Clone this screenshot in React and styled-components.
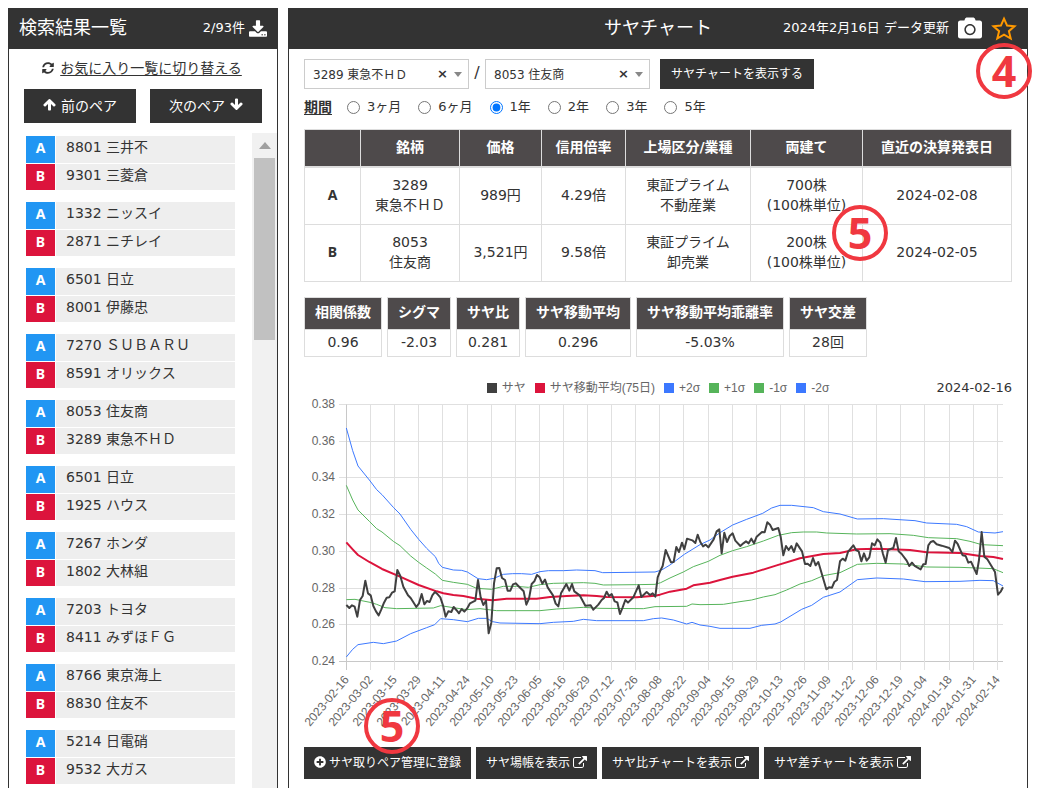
import React, { useState } from 'react';
import styled, { createGlobalStyle } from 'styled-components';
import { FaCamera, FaPlusCircle, FaSyncAlt } from 'react-icons/fa';

const colors = {
  dark: '#333333',
  tableHead: '#4e4a4b',
  line: '#dddddd',
  text: '#333333',
  sideA: '#2196f3',
  sideB: '#dc143c',
  rowBg: '#eeeeee',
  mark: '#f03840',
  orange: '#ff9900',
  chartText: '#666666',
  saya: '#404040',
  average: '#dc143c',
  sigma1: '#56b45a',
  sigma2: '#3c78ff',
};

const GlobalStyle = createGlobalStyle`
  * {
    box-sizing: border-box;
  }

  body {
    margin: 0;
    background: #ffffff;
    color: ${colors.text};
    font-family: 'DejaVu Sans', 'Noto Sans CJK JP', sans-serif;
    font-size: 14px;
    line-height: 20px;
  }

  button, select, input {
    font-family: inherit;
    color: inherit;
  }
`;

const Page = styled.div`
  display: grid;
  grid-template-columns: 270px minmax(0, 1fr);
  gap: 10px;
  min-height: 100vh;
  padding: 8px 13px 0 8px;
`;

const Panel = styled.section`
  display: flex;
  flex-direction: column;
  border: 1px solid ${colors.dark};
  border-bottom: 0;
`;

const PanelHeader = styled.header`
  display: grid;
  grid-template-columns: ${({ $columns }) => $columns};
  align-items: center;
  height: 40px;
  padding: 0 10px 2px;
  background: ${colors.dark};
  color: #ffffff;
  font-size: 13px;
`;

const Title = styled.h1`
  margin: 0;
  font-size: 18px;
  font-weight: 400;
  line-height: 36px;
`;

const HeaderTools = styled.div`
  position: relative;
  display: flex;
  justify-content: flex-end;
  align-items: center;
  gap: ${({ $gap }) => $gap};
`;

const IconButton = styled.button`
  display: flex;
  padding: 0;
  border: 0;
  background: none;
  color: ${({ $color }) => $color || '#ffffff'};
  font-size: ${({ $size }) => $size};
  cursor: pointer;
`;

const SwitchRow = styled.div`
  display: flex;
  justify-content: center;
  align-items: center;
  gap: 6px;
  height: 40px;
  padding: 0 2px 2px 0;
  font-size: 12px;
`;

const SwitchLink = styled.a`
  color: ${colors.text};
  font-size: 14px;
  text-underline-offset: 2px;
`;

const PairNav = styled.div`
  display: grid;
  grid-template-columns: 1fr 1fr;
  gap: 14px;
  padding: 0 15px;
`;

const DarkButton = styled.button`
  display: flex;
  justify-content: center;
  align-items: center;
  gap: ${({ $gap }) => $gap || '3px'};
  height: ${({ $height }) => $height};
  padding: 0 ${({ $padding }) => $padding || '10px'} 3px;
  border: 0;
  background: ${colors.dark};
  color: #ffffff;
  font-size: ${({ $size }) => $size || '12px'};
  white-space: nowrap;
  cursor: pointer;
`;

const ListArea = styled.div`
  display: flex;
  flex: 1;
  justify-content: space-between;
  margin-top: 10px;
`;

const PairList = styled.ul`
  display: flex;
  flex: 1;
  flex-direction: column;
  gap: 12px;
  margin: 0;
  padding: 3px 17px 0 17px;
  list-style: none;
`;

const PairItem = styled.li`
  display: grid;
  grid-template-columns: 29px 1fr;
  grid-template-rows: 27px 26px;
  gap: 1px;
  cursor: pointer;
`;

const SideBadge = styled.span`
  background: ${({ $side }) => ($side === 'A' ? colors.sideA : colors.sideB)};
  color: #ffffff;
  font-family: 'Noto Sans', sans-serif;
  font-weight: 700;
  line-height: 23px;
  text-align: center;
`;

const StockName = styled.span`
  padding-left: 10px;
  background: ${colors.rowBg};
  line-height: 22px;
`;

const ScrollTrack = styled.div`
  display: flex;
  flex-direction: column;
  align-items: center;
  gap: 9px;
  width: 25px;
  padding-top: 9px;
  background: #f1f1f1;

  &::before {
    content: '';
    border: 6px solid transparent;
    border-top: 0;
    border-bottom: 7px solid #a0a0a0;
  }
`;

const ScrollThumb = styled.div`
  width: 21px;
  height: 182px;
  background: #c1c1c1;
`;

const Content = styled.main`
  padding: 10px 15px 8px;
`;

const PairForm = styled.form`
  display: flex;
  align-items: center;
`;

const SelectBox = styled.div`
  position: relative;
  width: 165px;

  select {
    width: 100%;
    height: 30px;
    padding: 1px 40px 0 8px;
    border: 1px solid #cccccc;
    border-radius: 0;
    background: #ffffff;
    font-size: 12px;
    appearance: none;
  }

  button {
    position: absolute;
    top: 5px;
    right: 21px;
    padding: 0;
    border: 0;
    background: none;
    font-size: 13px;
    font-weight: 700;
    line-height: 20px;
  }

  &::after {
    content: '';
    position: absolute;
    top: 13px;
    right: 7px;
    border: 4px solid transparent;
    border-top: 5px solid #888888;
    border-bottom: 0;
    pointer-events: none;
  }
`;

const Slash = styled.span`
  width: 16px;
  padding-bottom: 3px;
  font-size: 16px;
  text-align: center;
`;

const SubmitWrap = styled.div`
  margin-left: 10px;
`;

const PeriodRow = styled.fieldset`
  display: flex;
  align-items: center;
  gap: 15px;
  height: 20px;
  margin: 8px 0 12px;
  padding: 0;
  border: 0;
  font-size: 13px;
`;

const PeriodTitle = styled.span`
  font-size: 14px;
  font-weight: 700;
  text-decoration: underline;
  text-underline-offset: 2px;
`;

const PeriodChoices = styled.div`
  display: flex;
  gap: 17px;
`;

const PeriodLabel = styled.label`
  display: flex;
  align-items: center;
  gap: 7px;

  input {
    width: 13px;
    height: 13px;
    margin: 0;
  }
`;

const TableArea = styled.div`
  position: relative;
`;

const StockTable = styled.table`
  width: 100%;
  border-collapse: collapse;
  table-layout: fixed;
  text-align: center;

  th, td {
    padding: 7px 0 9px;
    border: 1px solid ${colors.line};
    white-space: pre-line;
  }

  thead th {
    border-bottom-width: 2px;
    background: ${colors.tableHead};
    color: #ffffff;
  }

  tbody th {
    font-family: 'Noto Sans', sans-serif;
  }
`;

const Stats = styled.dl`
  display: flex;
  gap: 5px;
  margin: 15px 0 20px;
`;

const Stat = styled.div`
  border: 1px solid ${colors.line};
  text-align: center;

  dt {
    padding: 4px 10px 7px;
    background: ${colors.tableHead};
    color: #ffffff;
    font-weight: 700;
  }

  dd {
    margin: 0;
    padding: 2px 0 4px;
    border-top: 1px solid ${colors.line};
  }
`;

const ChartHead = styled.div`
  display: grid;
  grid-template-columns: 1fr auto 1fr;
  align-items: center;
  height: 21px;
  font-size: 13px;

  time {
    text-align: right;
  }
`;

const Legend = styled.ul`
  display: flex;
  grid-column: 2;
  gap: 9px;
  margin: 0;
  padding: 0;
  list-style: none;
  color: ${colors.chartText};
  font-family: 'Liberation Sans', 'Noto Sans CJK JP', sans-serif;
  font-size: 12px;
`;

const LegendItem = styled.li`
  display: flex;
  align-items: center;
  gap: 5px;

  &::before {
    content: '';
    width: 10px;
    height: 10px;
    background: ${({ $color }) => $color};
  }
`;

const ChartArea = styled.div`
  position: relative;

  svg {
    display: block;
    width: 100%;
    overflow: visible;
  }

  text {
    fill: ${colors.chartText};
    font-family: 'Liberation Sans', sans-serif;
    font-size: 12px;
    text-anchor: end;
  }
`;

const Actions = styled.div`
  display: flex;
  gap: 5px;
  margin-top: 11px;
`;

// numbered circle that lies over the page and points at a feature
const Mark = styled.span`
  position: absolute;
  z-index: 1;
  top: ${({ $top }) => $top};
  left: ${({ $left }) => $left};
  right: ${({ $right }) => $right};
  width: 56px;
  height: 56px;
  border: 4px solid ${colors.mark};
  border-radius: 50%;
  color: ${colors.mark};
  font-family: 'Open Sans', sans-serif;
  font-size: 43px;
  font-weight: 700;
  line-height: 47px;
  text-align: center;
  pointer-events: none;
`;

const pairs = [
  ['8801 三井不', '9301 三菱倉'],
  ['1332 ニッスイ', '2871 ニチレイ'],
  ['6501 日立', '8001 伊藤忠'],
  ['7270 ＳＵＢＡＲＵ', '8591 オリックス'],
  ['8053 住友商', '3289 東急不ＨＤ'],
  ['6501 日立', '1925 ハウス'],
  ['7267 ホンダ', '1802 大林組'],
  ['7203 トヨタ', '8411 みずほＦＧ'],
  ['8766 東京海上', '8830 住友不'],
  ['5214 日電硝', '9532 大ガス'],
];

const periods = ['3ヶ月', '6ヶ月', '1年', '2年', '3年', '5年'];

const columns = [
  { title: '', width: 56 },
  { title: '銘柄', width: 99 },
  { title: '価格', width: 82 },
  { title: '信用倍率', width: 84 },
  { title: '上場区分/業種', width: 125 },
  { title: '両建て', width: 112 },
  { title: '直近の決算発表日', width: 149 },
];

const stocks = [
  {
    side: 'A',
    cells: ['3289\n東急不ＨＤ', '989円', '4.29倍', '東証プライム\n不動産業', '700株\n(100株単位)', '2024-02-08'],
  },
  {
    side: 'B',
    cells: ['8053\n住友商', '3,521円', '9.58倍', '東証プライム\n卸売業', '200株\n(100株単位)', '2024-02-05'],
  },
];

const stats = [
  ['相関係数', '0.96'],
  ['シグマ', '-2.03'],
  ['サヤ比', '0.281'],
  ['サヤ移動平均', '0.296'],
  ['サヤ移動平均乖離率', '-5.03%'],
  ['サヤ交差', '28回'],
];

const legend = [
  ['サヤ', colors.saya],
  ['サヤ移動平均(75日)', colors.average],
  ['+2σ', colors.sigma2],
  ['+1σ', colors.sigma1],
  ['-1σ', colors.sigma1],
  ['-2σ', colors.sigma2],
];

const yTicks = ['0.38', '0.36', '0.34', '0.32', '0.30', '0.28', '0.26', '0.24'];

const xTicks = [
  '2023-02-16', '2023-03-02', '2023-03-15', '2023-03-29', '2023-04-11', '2023-04-24', '2023-05-10',
  '2023-05-23', '2023-06-05', '2023-06-16', '2023-06-29', '2023-07-12', '2023-07-26', '2023-08-08',
  '2023-08-22', '2023-09-04', '2023-09-15', '2023-09-29', '2023-10-13', '2023-10-26', '2023-11-09',
  '2023-11-22', '2023-12-06', '2023-12-19', '2024-01-04', '2024-01-18', '2024-01-31', '2024-02-14',
];

// series points, three units to one chart unit
const series = [
  {
    color: colors.sigma2,
    width: 1,
    points: `169,174 188,242 204,288 238,330 260,359 276,374 310,412 330,432 362,478 386,508 410,535
      436,560 446,580 457,592 490,600 515,601 532,606 564,626 590,629 612,625 640,613 668,611 695,611
      725,613 750,605 775,602 820,602 860,600 915,602 938,608 1020,607 1095,606 1115,600 1140,585
      1183,553 1230,524 1260,510 1290,488 1328,465 1370,448 1418,430 1445,414 1470,406 1505,406
      1570,413 1600,425 1650,432 1702,447 1780,446 1875,452 1910,459 2000,463 2030,470 2065,486
      2115,489 2139,485`,
  },
  {
    color: colors.sigma2,
    width: 1,
    points: `169,861 188,838 204,824 250,817 280,821 320,813 362,791 410,773 434,764 452,746 490,749
      532,755 565,745 590,745 608,755 630,759 750,761 790,757 850,754 880,748 920,752 1060,752
      1090,746 1115,744 1150,750 1190,762 1206,757 1230,765 1260,769 1290,775 1380,775 1415,766
      1455,762 1472,756 1535,718 1565,706 1600,682 1650,666 1702,629 1760,624 1840,627 1905,635
      2010,634 2070,631 2110,632 2139,648`,
  },
  {
    color: colors.sigma1,
    width: 1,
    points: `169,346 188,390 204,420 238,454 260,476 276,486 310,514 330,527 362,558 386,577 410,594
      436,612 457,631 490,637 532,643 560,655 604,658 640,649 680,649 715,652 750,644 790,640
      880,638 915,640 940,645 1040,644 1095,643 1112,638 1140,624 1180,606 1210,590 1255,574
      1290,556 1328,542 1370,530 1420,513 1465,496 1505,488 1540,486 1580,486 1610,489 1700,492
      1800,491 1870,496 1915,503 2000,506 2040,514 2075,524 2139,527`,
  },
  {
    color: colors.sigma1,
    width: 1,
    points: `169,689 195,688 240,697 260,703 285,713 320,716 430,714 452,707 490,713 530,719 570,716
      620,722 750,722 800,717 880,712 930,715 1060,716 1095,710 1190,709 1206,702 1230,704
      1300,703 1350,695 1385,690 1420,681 1455,674 1490,660 1530,642 1565,632 1600,617 1650,608
      1702,583 1760,580 1840,582 1910,591 2010,592 2110,596 2139,608`,
  },
  {
    color: colors.average,
    width: 2,
    points: `169,517 188,538 204,555 238,576 276,597 330,620 386,645 440,664 460,670 490,675 520,678
      560,686 608,691 650,686 740,686 780,681 830,678 880,676 920,678 950,681 1040,682 1095,677
      1110,674 1140,665 1190,656 1210,646 1260,638 1290,630 1328,620 1390,608 1460,586 1530,565
      1600,552 1650,549 1700,538 1760,536 1860,540 1910,547 2010,549 2070,558 2110,561 2139,567`,
  },
  {
    color: colors.saya,
    width: 2,
    points: `169,705 178,714 186,706 194,710 202,740 210,690 218,678 226,632 234,670 242,676 250,708
      258,724 266,736 274,718 282,698 290,683 298,682 306,668 314,664 322,600 331,618 340,650
      354,676 362,684 372,700 379,711 387,700 395,672 403,703 411,693 419,696 427,676 435,666
      443,673 451,682 459,706 467,740 475,724 484,726 491,711 499,720 507,730 515,717 523,725
      531,716 540,700 556,692 564,630 572,682 580,705 588,692 596,790 604,758 612,640 620,595
      628,594 636,624 645,630 653,662 661,662 669,643 677,640 685,648 701,664 709,704 717,686
      725,642 733,634 741,615 749,622 757,641 765,629 773,652 789,676 797,701 805,709 813,670
      829,642 838,662 846,642 853,664 869,676 886,707 902,706 910,719 925,704 935,690 942,684
      950,665 957,678 965,672 974,694 982,697 990,732 998,712 1006,690 1014,698 1030,682
      1046,646 1054,681 1070,666 1080,675 1088,670 1096,680 1103,622 1111,602 1118,588 1127,540
      1143,577 1151,576 1159,531 1167,546 1176,518 1183,538 1191,506 1207,511 1216,519 1223,494
      1231,516 1239,529 1247,524 1255,532 1263,520 1271,508 1280,484 1288,478 1295,550 1303,488
      1311,516 1319,498 1328,490 1336,512 1351,528 1360,520 1368,514 1376,520 1384,506 1392,520
      1400,500 1416,486 1424,487 1432,457 1440,464 1448,480 1465,474 1472,500 1480,556 1488,528
      1496,540 1504,528 1512,546 1520,520 1536,544 1545,582 1553,581 1561,588 1569,564 1577,586
      1585,576 1609,658 1617,652 1626,653 1633,636 1641,630 1650,574 1658,566 1666,572 1674,546
      1690,526 1698,540 1706,544 1714,574 1722,550 1730,572 1738,562 1746,520 1754,526 1762,508
      1771,518 1779,552 1787,578 1794,540 1810,534 1818,504 1826,544 1835,552 1850,572 1858,588
      1866,578 1874,588 1892,598 1900,583 1907,582 1915,526 1922,516 1930,513 1940,523 1955,527
      1978,534 1987,546 1995,512 2003,522 2018,556 2027,558 2035,578 2043,575 2060,612 2067,570
      2075,486 2083,560 2092,568 2108,594 2115,606 2124,674 2132,665 2139,652`,
  },
];

const PLOT = { left: 42.5, right: 699, top: 6.5, bottom: 263.5 };

const xAt = (i) => Math.round(PLOT.left + i * 24.1 - 0.5) + 0.5;
const yAt = (i) => Math.round(PLOT.top + (i * (PLOT.bottom - PLOT.top)) / 7 - 0.5) + 0.5;

const StarIcon = () => (
  <svg width="26" height="25" viewBox="0 0 26 25" fill="none" stroke="currentColor" strokeWidth="2">
    <path d="M13 2.6 L16.1 9.6 L23.5 10.2 L17.9 15.2 L19.7 22.5 L13 18.6 L6.3 22.5 L8.1 15.2 L2.5 10.2 L9.9 9.6 Z" />
  </svg>
);

const DownloadIcon = () => (
  <svg width="18" height="17" viewBox="0 0 1664 1536" fill="currentColor" aria-hidden="true">
    <path d="M1280 1344q0-26-19-45t-45-19-45 19-19 45 19 45 45 19 45-19 19-45zM1536 1344q0-26-19-45t-45-19-45 19-19 45 19 45 45 19 45-19 19-45zM1664 1120v320q0 40-28 68t-68 28h-1472q-40 0-68-28t-28-68v-320q0-40 28-68t68-28h465l135 136q58 56 136 56t136-56l136-136h464q40 0 68 28t28 68zM1339 551q17 41-14 70l-448 448q-18 19-45 19t-45-19l-448-448q-31-29-14-70 17-39 59-39h256v-448q0-26 19-45t45-19h256q26 0 45 19t19 45v448h256q42 0 59 39z" />
  </svg>
);

const ArrowIcon = ({ down }) => (
  <svg width="13" height="13" viewBox="0 0 1664 1664" fill="currentColor" aria-hidden="true">
    <path
      transform={down ? 'rotate(180 832 832)' : undefined}
      d="M1611 900q0 51-37 90l-75 75q-38 38-91 38-54 0-90-38l-294-293v704q0 52-37.500 84.500t-90.500 32.500h-128q-53 0-90.500-32.500t-37.500-84.500v-704l-294 293q-36 38-90 38t-90-38l-75-75q-38-38-38-90 0-53 38-91l651-651q35-37 90-37 54 0 91 37l651 651q37 39 37 91z"
    />
  </svg>
);

const ExternalIcon = () => (
  <svg width="14" height="12" viewBox="0 0 1792 1536" fill="currentColor" aria-hidden="true">
    <path d="M1408 928v320q0 119-84.5 203.5t-203.5 84.5h-832q-119 0-203.5-84.5t-84.5-203.5v-832q0-119 84.5-203.5t203.5-84.5h704q14 0 23 9t9 23v64q0 14-9 23t-23 9h-704q-66 0-113 47t-47 113v832q0 66 47 113t113 47h832q66 0 113-47t47-113v-320q0-14 9-23t23-9h64q14 0 23 9t9 23zM1792 64v512q0 26-19 45t-45 19-45-19l-176-176-652 652q-10 10-23 10t-23-10l-114-114q-10-10-10-23t10-23l652-652-176-176q-19-19-19-45t19-45 45-19h512q26 0 45 19t19 45z" />
  </svg>
);

const SearchResults = () => (
  <Panel>
    <PanelHeader $columns="1fr auto">
      <Title>検索結果一覧</Title>
      <HeaderTools $gap="4px">
        <span>2/93件</span>
        <IconButton type="button" aria-label="ダウンロード">
          <DownloadIcon />
        </IconButton>
      </HeaderTools>
    </PanelHeader>
    <SwitchRow>
      <FaSyncAlt />
      <SwitchLink href="#favorites">お気に入り一覧に切り替える</SwitchLink>
    </SwitchRow>
    <PairNav>
      <DarkButton type="button" $height="34px" $size="14px" $gap="5px">
        <ArrowIcon />前のペア
      </DarkButton>
      <DarkButton type="button" $height="34px" $size="14px" $gap="5px">
        次のペア<ArrowIcon down />
      </DarkButton>
    </PairNav>
    <ListArea>
      <PairList>
        {pairs.map(([a, b]) => (
          <PairItem key={a + b}>
            <SideBadge $side="A">A</SideBadge>
            <StockName>{a}</StockName>
            <SideBadge $side="B">B</SideBadge>
            <StockName>{b}</StockName>
          </PairItem>
        ))}
      </PairList>
      <ScrollTrack>
        <ScrollThumb />
      </ScrollTrack>
    </ListArea>
  </Panel>
);

const StockSelect = ({ label, value }) => (
  <SelectBox>
    <select aria-label={label} defaultValue={value}>
      <option>{value}</option>
    </select>
    <button type="button" aria-label="クリア">×</button>
  </SelectBox>
);

const SayaChart = () => (
  <ChartArea>
    <svg viewBox="0 0 708 338" role="img" aria-label="サヤチャート">
      {yTicks.map((tick, i) => (
        <g key={tick}>
          <path d={`M35 ${yAt(i)}H${PLOT.right}`} stroke={i === 7 ? '#c8c8c8' : '#e0e0e0'} />
          <text x="31" y={yAt(i) + 3}>{tick}</text>
        </g>
      ))}
      {xTicks.map((tick, i) => (
        <g key={tick}>
          <path d={`M${xAt(i)} ${PLOT.top}V272`} stroke={i === 0 ? '#c8c8c8' : '#e0e0e0'} />
          <text transform={`translate(${xAt(i) + 3} 282) rotate(-50)`}>{tick}</text>
        </g>
      ))}
      <g transform="translate(-14 -28) scale(0.33333)" fill="none" strokeLinejoin="round">
        {series.map(({ color, width, points }) => (
          <polyline key={points} points={points} stroke={color} strokeWidth={width * 3} />
        ))}
      </g>
    </svg>
    <Mark $top="300px" $left="60px">5</Mark>
  </ChartArea>
);

const App = () => {
  const [period, setPeriod] = useState('1年');

  return (
    <>
      <GlobalStyle />
      <Page>
        <SearchResults />
        <Panel>
          <PanelHeader $columns="1fr auto 1fr">
            <span />
            <Title>サヤチャート</Title>
            <HeaderTools $gap="9px">
              <span>2024年2月16日 データ更新</span>
              <IconButton type="button" $size="24px" aria-label="画像を保存">
                <FaCamera />
              </IconButton>
              <IconButton type="button" $color={colors.orange} aria-label="お気に入り">
                <StarIcon />
              </IconButton>
              <Mark $top="27px" $right="-15px">4</Mark>
            </HeaderTools>
          </PanelHeader>
          <Content>
            <PairForm onSubmit={(e) => e.preventDefault()}>
              <StockSelect label="銘柄A" value="3289 東急不ＨＤ" />
              <Slash>/</Slash>
              <StockSelect label="銘柄B" value="8053 住友商" />
              <SubmitWrap>
                <DarkButton type="submit" $height="30px" $padding="11px">
                  サヤチャートを表示する
                </DarkButton>
              </SubmitWrap>
            </PairForm>
            <PeriodRow>
              <PeriodTitle>期間</PeriodTitle>
              <PeriodChoices>
                {periods.map((item) => (
                  <PeriodLabel key={item}>
                    <input
                      type="radio"
                      name="period"
                      checked={period === item}
                      onChange={() => setPeriod(item)}
                    />
                    {item}
                  </PeriodLabel>
                ))}
              </PeriodChoices>
            </PeriodRow>
            <TableArea>
              <StockTable>
                <colgroup>
                  {columns.map(({ title, width }) => (
                    <col key={title} width={width} />
                  ))}
                </colgroup>
                <thead>
                  <tr>
                    {columns.map(({ title }) => (
                      <th key={title} scope="col">{title}</th>
                    ))}
                  </tr>
                </thead>
                <tbody>
                  {stocks.map(({ side, cells }) => (
                    <tr key={side}>
                      <th scope="row">{side}</th>
                      {cells.map((cell) => (
                        <td key={cell}>{cell}</td>
                      ))}
                    </tr>
                  ))}
                </tbody>
              </StockTable>
              <Mark $top="76px" $right="124px">5</Mark>
            </TableArea>
            <Stats>
              {stats.map(([name, value]) => (
                <Stat key={name}>
                  <dt>{name}</dt>
                  <dd>{value}</dd>
                </Stat>
              ))}
            </Stats>
            <ChartHead>
              <Legend>
                {legend.map(([name, color]) => (
                  <LegendItem key={name} $color={color}>{name}</LegendItem>
                ))}
              </Legend>
              <time dateTime="2024-02-16">2024-02-16</time>
            </ChartHead>
            <SayaChart />
            <Actions>
              <DarkButton type="button" $height="32px">
                <FaPlusCircle />サヤ取りペア管理に登録
              </DarkButton>
              <DarkButton type="button" $height="32px">
                サヤ場帳を表示<ExternalIcon />
              </DarkButton>
              <DarkButton type="button" $height="32px">
                サヤ比チャートを表示<ExternalIcon />
              </DarkButton>
              <DarkButton type="button" $height="32px">
                サヤ差チャートを表示<ExternalIcon />
              </DarkButton>
            </Actions>
          </Content>
        </Panel>
      </Page>
    </>
  );
};

export default App;
